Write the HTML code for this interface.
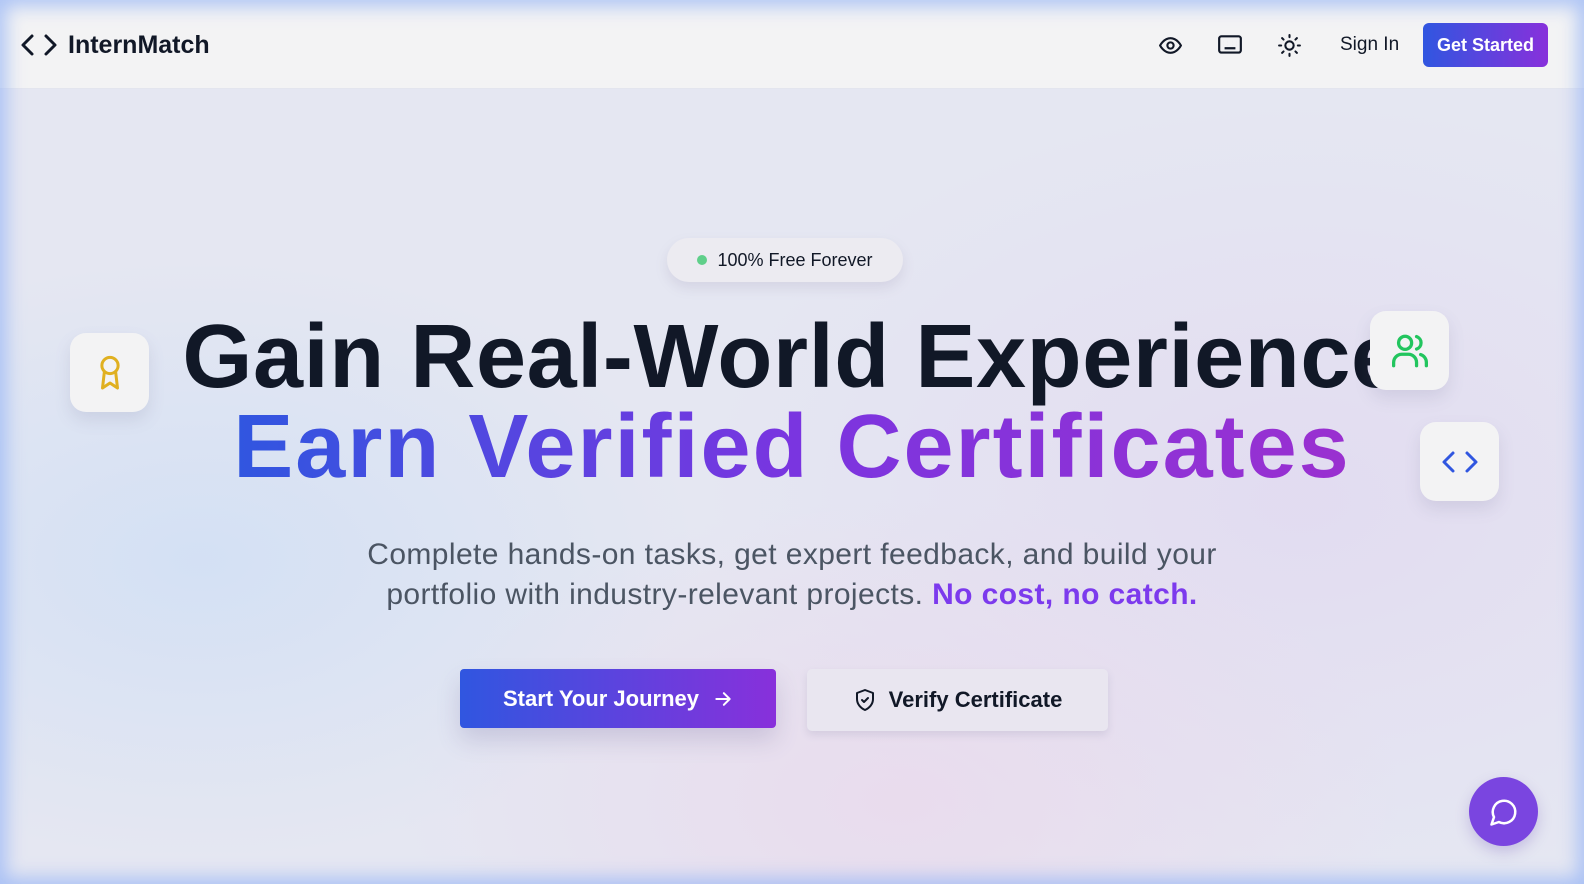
<!DOCTYPE html>
<html><head><meta charset="utf-8"><style>
*{margin:0;padding:0;box-sizing:border-box}
body{width:1584px;height:884px;overflow:hidden;font-family:"Liberation Sans",sans-serif;background:#e6e8f3;position:relative}
.bg{position:absolute;inset:0;background:radial-gradient(ellipse 500px 300px at 200px 560px,rgba(200,220,245,.6),transparent),radial-gradient(ellipse 500px 300px at 900px 800px,rgba(235,215,235,.7),transparent),radial-gradient(ellipse 600px 400px at 1300px 500px,rgba(225,215,240,.7),transparent),#e5e7f2}
.edge{position:absolute;inset:0;box-shadow:inset 0 0 18px 6px rgba(150,180,245,.75);pointer-events:none;z-index:10}
nav{position:absolute;left:0;top:0;width:1584px;height:89px;background:#f3f3f4;border-bottom:1px solid #e3e5ee}
.logo{position:absolute;left:20px;top:30px;display:flex;align-items:center;gap:10px;font-weight:bold;font-size:25px;color:#111827}
.ic{position:absolute;top:33px}
.signin{position:absolute;left:1340px;top:34px;font-size:19px;color:#111827}
.gs{position:absolute;left:1423px;top:23px;width:125px;height:44px;border-radius:6px;background:linear-gradient(90deg,#3056e0,#8830db);color:#fff;font-size:18px;font-weight:bold;display:flex;align-items:center;justify-content:center}
.pill{position:absolute;left:667px;top:238px;width:236px;height:44px;border-radius:22px;background:#ecebf1;box-shadow:0 6px 12px rgba(120,110,150,.15);display:flex;align-items:center;justify-content:center;gap:10px;font-size:18px;color:#111827}
.pill i{width:10px;height:10px;border-radius:50%;background:#5fcf8a;display:block}
h1{position:absolute;left:0;width:1584px;text-align:center;font-size:90px;line-height:90px;font-weight:bold}
.h1a{top:312px;color:#111827;letter-spacing:0.6px}
.h1b{top:402px;letter-spacing:2px}
.h1b span{background:linear-gradient(90deg,#3056e0,#7a35e0 50%,#9a30d0);-webkit-background-clip:text;background-clip:text;color:transparent}
.card{position:absolute;width:79px;height:79px;border-radius:16px;background:#f3f3f4;box-shadow:0 8px 16px rgba(100,100,140,.15);display:flex;align-items:center;justify-content:center}
p.sub{position:absolute;left:0;width:1584px;top:535px;text-align:center;font-size:30px;line-height:40px;letter-spacing:0.4px;color:#4b5563}
p.sub b{color:#7c3aed}
.b1{position:absolute;left:460px;top:669px;width:316px;height:59px;border-radius:4px;background:linear-gradient(90deg,#3056e0,#8830db);color:#fff;font-weight:bold;font-size:22px;display:flex;align-items:center;justify-content:center;gap:14px;box-shadow:0 12px 24px rgba(90,80,140,.2)}
.b2{position:absolute;left:807px;top:669px;width:301px;height:62px;border-radius:5px;background:#e9e6f0;box-shadow:0 4px 8px rgba(100,100,140,.15);color:#111827;font-weight:bold;font-size:22px;display:flex;align-items:center;justify-content:center;gap:12px}
.chat{position:absolute;left:1469px;top:777px;width:69px;height:69px;border-radius:50%;background:#7a45e0;display:flex;align-items:center;justify-content:center;box-shadow:0 6px 14px rgba(100,70,180,.25)}
</style></head><body>
<div class="bg"></div>
<nav>
<div class="logo"><svg width="38" height="30" viewBox="0 0 38 30" fill="none" stroke="#111827" stroke-width="3" stroke-linecap="round" stroke-linejoin="round"><path d="M12 6 3 15l9 9M26 6l9 9-9 9"/></svg>InternMatch</div>
<svg class="ic" style="left:1158px" width="25" height="25" viewBox="0 0 24 24" fill="none" stroke="#111827" stroke-width="2"><path d="M2 12s3.5-7 10-7 10 7 10 7-3.5 7-10 7S2 12 2 12z"/><circle cx="12" cy="12" r="3"/></svg>
<svg class="ic" style="left:1217px" width="26" height="24" viewBox="0 0 24 22" fill="none" stroke="#111827" stroke-width="2"><rect x="2" y="3" width="20" height="15" rx="2"/><path d="M6 8h.01M10 8h.01M14 8h.01M18 8h.01M6 11h.01M10 11h.01M14 11h.01M18 11h.01M7 14h10"/></svg>
<svg class="ic" style="left:1277px" width="25" height="25" viewBox="0 0 24 24" fill="none" stroke="#111827" stroke-width="2" stroke-linecap="round"><circle cx="12" cy="12" r="4"/><path d="M12 2v2M12 20v2M4.9 4.9l1.4 1.4M17.7 17.7l1.4 1.4M2 12h2M20 12h2M4.9 19.1l1.4-1.4M17.7 6.3l1.4-1.4"/></svg>
<div class="signin">Sign In</div>
<div class="gs">Get Started</div>
</nav>
<div class="pill"><i></i>100% Free Forever</div>
<h1 class="h1a">Gain Real-World Experience</h1>
<h1 class="h1b"><span>Earn Verified Certificates</span></h1>
<div class="card" style="left:70px;top:333px"><svg width="30" height="38" viewBox="0 0 24 30" fill="none" stroke="#e0b020" stroke-width="2.4" stroke-linejoin="round"><circle cx="12" cy="9" r="6.5"/><path d="M7.5 14 6 27l6-4 6 4-1.5-13"/></svg></div>
<div class="card" style="left:1370px;top:311px"><svg width="40" height="36" viewBox="0 0 24 22" fill="none" stroke="#22c55e" stroke-width="2" stroke-linecap="round"><circle cx="9" cy="6" r="4"/><path d="M2 20v-2a5 5 0 0 1 5-5h4a5 5 0 0 1 5 5v2M16 2.2a4 4 0 0 1 0 7.6M22 20v-2a5 5 0 0 0-3.5-4.8"/></svg></div>
<div class="card" style="left:1420px;top:422px"><svg width="40" height="30" viewBox="0 0 38 30" fill="none" stroke="#3056e0" stroke-width="3" stroke-linecap="round" stroke-linejoin="round"><path d="M12 6 3 15l9 9M26 6l9 9-9 9"/></svg></div>
<p class="sub">Complete hands-on tasks, get expert feedback, and build your<br>portfolio with industry-relevant projects. <b>No cost, no catch.</b></p>
<div class="b1">Start Your Journey <svg width="20" height="20" viewBox="0 0 24 24" fill="none" stroke="#fff" stroke-width="2.4" stroke-linecap="round" stroke-linejoin="round"><path d="M4 12h16M13 5l7 7-7 7"/></svg></div>
<div class="b2"><svg width="24" height="24" viewBox="0 0 24 24" fill="none" stroke="#111827" stroke-width="2" stroke-linejoin="round" stroke-linecap="round"><path d="M12 2 4 5v6c0 5 3.5 9 8 11 4.5-2 8-6 8-11V5z"/><path d="m9 12 2 2 4-4"/></svg>Verify Certificate</div>
<div class="chat"><svg width="30" height="30" viewBox="0 0 24 24" fill="none" stroke="#fff" stroke-width="2" stroke-linejoin="round"><path d="M7.9 20A9 9 0 1 0 4 16.1L2 22z"/></svg></div>
<div class="edge"></div>
</body></html>
